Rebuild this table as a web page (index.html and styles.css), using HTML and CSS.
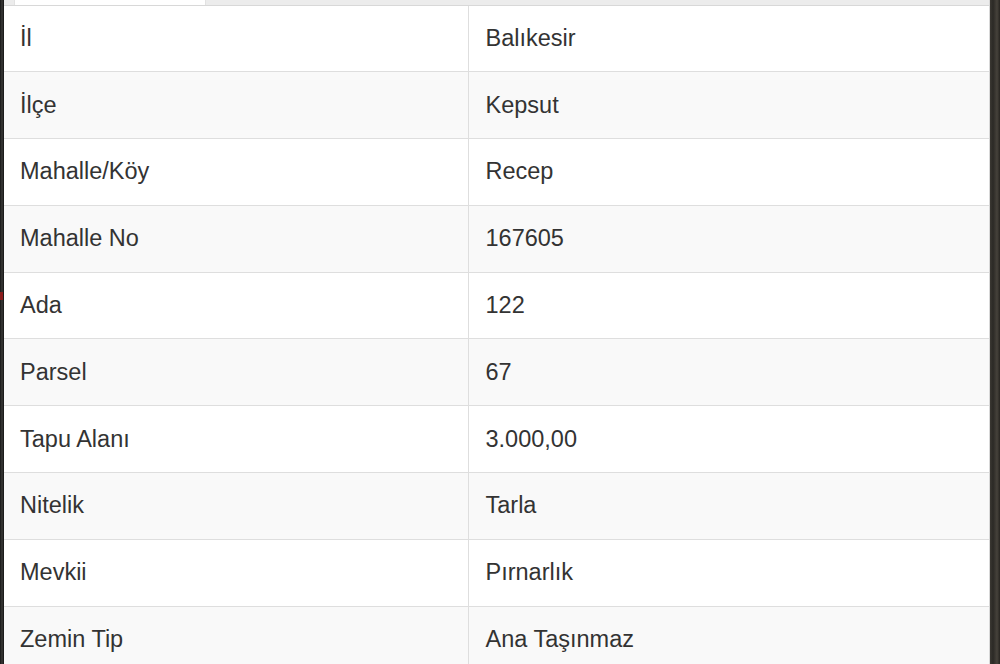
FILE: index.html
```html
<!DOCTYPE html>
<html lang="tr">
<head>
<meta charset="utf-8">
<link rel="stylesheet" href="styles.css">
</head>
<body>
<div class="page">
  <div class="edge-left"><span class="pin"></span></div>
  <div class="panel">
    <div class="tabs">
      <div class="tab active"></div>
      <div class="tab-rest"></div>
    </div>
    <table class="info">
      <tbody>
        <tr><td>İl</td><td>Balıkesir</td></tr>
        <tr><td>İlçe</td><td>Kepsut</td></tr>
        <tr><td>Mahalle/Köy</td><td>Recep</td></tr>
        <tr><td>Mahalle No</td><td>167605</td></tr>
        <tr><td>Ada</td><td>122</td></tr>
        <tr><td>Parsel</td><td>67</td></tr>
        <tr><td>Tapu Alanı</td><td>3.000,00</td></tr>
        <tr><td>Nitelik</td><td>Tarla</td></tr>
        <tr><td>Mevkii</td><td>Pırnarlık</td></tr>
        <tr><td>Zemin Tip</td><td>Ana Taşınmaz</td></tr>
      </tbody>
    </table>
  </div>
  <div class="edge-right"></div>
</div>
</body>
</html>
```
FILE: styles.css
```css
html, body {
  margin: 0;
  padding: 0;
  height: 100%;
  overflow: hidden;
  background: #1f1d1b;
}
.page {
  display: flex;
  width: 1000px;
  height: 664px;
  overflow: hidden;
}
.edge-left {
  width: 4px;
  flex: none;
  background: linear-gradient(90deg, #151515 0, #3a3a38 50%, #121212 100%);
  position: relative;
}
.pin {
  position: absolute;
  left: 0;
  top: 292px;
  width: 3px;
  height: 8px;
  background: #8a1c1c;
}
.edge-right {
  flex: 1;
  background: linear-gradient(90deg, #d8d8d8 0, #d8d8d8 1px, #3b3833 1px, #2b2925 4px, #46423b 8px, #262420 11px);
}
.panel {
  width: 985px;
  flex: none;
  background: #fff;
  display: flex;
  flex-direction: column;
  overflow: hidden;
}
.tabs {
  flex: none;
  display: flex;
  height: 5px;
  background: #ececec;
  border-bottom: 1px solid #d8d8d8;
}
.tab.active {
  margin-left: 10px;
  width: 190px;
  background: #fff;
  border-left: 1px solid #e2e2e2;
  border-right: 1px solid #e2e2e2;
}
.info {
  flex: none;
  width: 100%;
  border-collapse: collapse;
  font-family: "Liberation Sans", Arial, sans-serif;
  font-size: 23.5px;
  color: #333;
}
.info td {
  padding: 0 16px;
  height: 66.8px;
  box-sizing: border-box;
  border-top: 1px solid #dedede;
  vertical-align: middle;
}
.info tr:first-child td {
  border-top: none;
  height: 65.8px;
}
.info td:first-child {
  width: 464px;
  border-right: 1px solid #dedede;
}
.info td:last-child {
  padding-left: 17px;
}
.info tr:nth-child(even) td {
  background: #f9f9f9;
}
```
